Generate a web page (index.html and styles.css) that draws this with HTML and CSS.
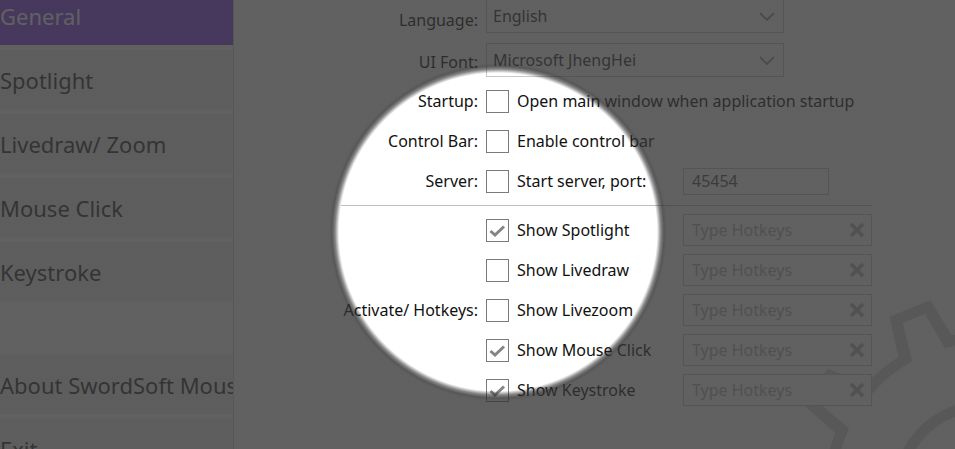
FILE: index.html
```html
<!DOCTYPE html>
<html>
<head>
<meta charset="utf-8">
<link rel="stylesheet" href="styles.css">
</head>
<body>
<div class="app">
  <nav class="sidebar">
    <div class="nav-item active">General</div>
    <div class="nav-item">Spotlight</div>
    <div class="nav-item">Livedraw/ Zoom</div>
    <div class="nav-item">Mouse Click</div>
    <div class="nav-item">Keystroke</div>
    <div class="nav-spacer"></div>
    <div class="nav-item">About SwordSoft Mouse</div>
    <div class="nav-item">Exit</div>
  </nav>
  <main class="main">
    <svg class="gear" width="440" height="440" viewBox="-220 -220 440 440">
      <g fill="#d8d8d8">
        <circle r="160"/>
        <polygon points="-30,-150 30,-150 22,-198 -22,-198" transform="rotate(-22)"/>
        <polygon points="-30,-150 30,-150 22,-198 -22,-198" transform="rotate(-58)"/>
        <polygon points="-30,-150 30,-150 22,-198 -22,-198" transform="rotate(-94)"/>
        <polygon points="-30,-150 30,-150 22,-198 -22,-198" transform="rotate(14)"/>
      </g>
      <g fill="#ffffff">
        <circle r="149"/>
        <polygon points="-19,-139 19,-139 12,-187 -12,-187" transform="rotate(-22)"/>
        <polygon points="-19,-139 19,-139 12,-187 -12,-187" transform="rotate(-58)"/>
        <polygon points="-19,-139 19,-139 12,-187 -12,-187" transform="rotate(-94)"/>
        <polygon points="-19,-139 19,-139 12,-187 -12,-187" transform="rotate(14)"/>
      </g>
      <circle r="86" fill="none" stroke="#d8d8d8" stroke-width="11"/>
    </svg>
    <div class="form">
      <span class="lbl">Language:</span>
      <div class="select">English<svg class="chev" width="16" height="9" viewBox="0 0 16 9"><path d="M1 1 L8 8 L15 1" fill="none" stroke="#999" stroke-width="1.8"/></svg></div>

      <span class="lbl">UI Font:</span>
      <div class="select">Microsoft JhengHei<svg class="chev" width="16" height="9" viewBox="0 0 16 9"><path d="M1 1 L8 8 L15 1" fill="none" stroke="#999" stroke-width="1.8"/></svg></div>

      <span class="lbl">Startup:</span>
      <span class="box"></span>
      <span class="opt wide">Open main window when application startup</span>

      <span class="lbl">Control Bar:</span>
      <span class="box"></span>
      <span class="opt wide">Enable control bar</span>

      <span class="lbl">Server:</span>
      <span class="box"></span>
      <span class="opt">Start server, port:</span>
      <div class="port">45454</div>

      <div class="sep"></div>

      <span class="lbl"></span>
      <span class="box"><svg width="23" height="23" viewBox="0 0 23 23"><path d="M4.5 12 L9 16 L18 7.5" fill="none" stroke="#858585" stroke-width="3"/></svg></span>
      <span class="opt">Show Spotlight</span>
      <div class="hotkey">Type Hotkeys<svg width="16" height="16" viewBox="0 0 16 16"><path d="M2 2 L14 14 M14 2 L2 14" stroke="#b8b8b8" stroke-width="3.8"/></svg></div>

      <span class="lbl"></span>
      <span class="box"></span>
      <span class="opt">Show Livedraw</span>
      <div class="hotkey">Type Hotkeys<svg width="16" height="16" viewBox="0 0 16 16"><path d="M2 2 L14 14 M14 2 L2 14" stroke="#b8b8b8" stroke-width="3.8"/></svg></div>

      <span class="lbl">Activate/ Hotkeys:</span>
      <span class="box"></span>
      <span class="opt">Show Livezoom</span>
      <div class="hotkey">Type Hotkeys<svg width="16" height="16" viewBox="0 0 16 16"><path d="M2 2 L14 14 M14 2 L2 14" stroke="#b8b8b8" stroke-width="3.8"/></svg></div>

      <span class="lbl"></span>
      <span class="box"><svg width="23" height="23" viewBox="0 0 23 23"><path d="M4.5 12 L9 16 L18 7.5" fill="none" stroke="#858585" stroke-width="3"/></svg></span>
      <span class="opt">Show Mouse Click</span>
      <div class="hotkey">Type Hotkeys<svg width="16" height="16" viewBox="0 0 16 16"><path d="M2 2 L14 14 M14 2 L2 14" stroke="#b8b8b8" stroke-width="3.8"/></svg></div>

      <span class="lbl"></span>
      <span class="box"><svg width="23" height="23" viewBox="0 0 23 23"><path d="M4.5 12 L9 16 L18 7.5" fill="none" stroke="#858585" stroke-width="3"/></svg></span>
      <span class="opt">Show Keystroke</span>
      <div class="hotkey">Type Hotkeys<svg width="16" height="16" viewBox="0 0 16 16"><path d="M2 2 L14 14 M14 2 L2 14" stroke="#b8b8b8" stroke-width="3.8"/></svg></div>
    </div>
  </main>
  <div class="spot"></div>
</div>
</body>
</html>
```
FILE: styles.css
```css
html, body {
  margin: 0;
  padding: 0;
  width: 955px;
  height: 449px;
  overflow: hidden;
  background: #ffffff;
}
.app {
  position: relative;
  display: flex;
  width: 955px;
  height: 449px;
  overflow: hidden;
  font-family: "Noto Sans", "Open Sans", sans-serif;
}
.sidebar {
  width: 233px;
  flex: none;
  border-right: 1px solid #d6d6d6;
  display: flex;
  flex-direction: column;
  gap: 5px;
  margin-top: -14px;
  background: #ffffff;
  overflow: hidden;
}
.nav-item {
  height: 59px;
  flex: none;
  display: flex;
  align-items: center;
  background: #f0f0f0;
  color: #333333;
  font-size: 22px;
  white-space: nowrap;
  padding-left: 0;
}
.nav-item.active {
  background: #8a45f0;
  color: #ffffff;
}
.nav-spacer {
  height: 44px;
  flex: none;
}
.main {
  position: relative;
  flex: 1;
  background: #ffffff;
  overflow: hidden;
}
.gear {
  position: absolute;
  left: 530px;
  top: 272px;
}
.form {
  position: relative;
  margin-top: -2px;
  display: grid;
  grid-template-columns: 244px 23px 158px 189px;
  grid-template-rows: 44px 39px 40px 40px 40px 9px repeat(5, 40px);
  column-gap: 8px;
  align-items: center;
  font-size: 16px;
  color: #111111;
}
.lbl {
  grid-column: 1;
  text-align: right;
  white-space: nowrap;
}
.select {
  grid-column: 2 / span 3;
  align-self: start;
  margin-top: 1px;
  width: 298px;
  height: 34px;
  box-sizing: border-box;
  border: 1px solid #c8c8c8;
  display: flex;
  align-items: center;
  justify-content: space-between;
  padding: 0 8px 0 6px;
  color: #333333;
  font-size: 16px;
}
.box {
  grid-column: 2;
  width: 23px;
  height: 23px;
  box-sizing: border-box;
  border: 1px solid #7a7a7a;
  background: #ffffff;
  display: flex;
  align-items: center;
  justify-content: center;
}
.box svg {
  flex: none;
}
.opt {
  grid-column: 3;
  white-space: nowrap;
}
.opt.wide {
  grid-column: 3 / span 2;
}
.port {
  grid-column: 4;
  width: 146px;
  height: 27px;
  box-sizing: border-box;
  border: 1px solid #c8c8c8;
  display: flex;
  align-items: center;
  padding-left: 8px;
  color: #555555;
}
.sep {
  grid-column: 1 / -1;
  margin-left: 107px;
  height: 1px;
  background: #bdbdbd;
}
.hotkey {
  grid-column: 4;
  height: 32px;
  box-sizing: border-box;
  border: 1px solid #c8c8c8;
  display: flex;
  align-items: center;
  justify-content: space-between;
  padding: 0 6px 0 8px;
  color: #b4b4b4;
  font-size: 16px;
  background: #ffffff;
}
.spot {
  position: absolute;
  inset: 0;
  pointer-events: none;
  background: radial-gradient(circle at 498px 232px,
    rgba(52, 52, 52, 0) 159px,
    rgba(30, 30, 30, 0.55) 163px,
    rgba(45, 45, 45, 0.8) 166px,
    rgba(52, 52, 52, 0.78) 169px);
}
```
